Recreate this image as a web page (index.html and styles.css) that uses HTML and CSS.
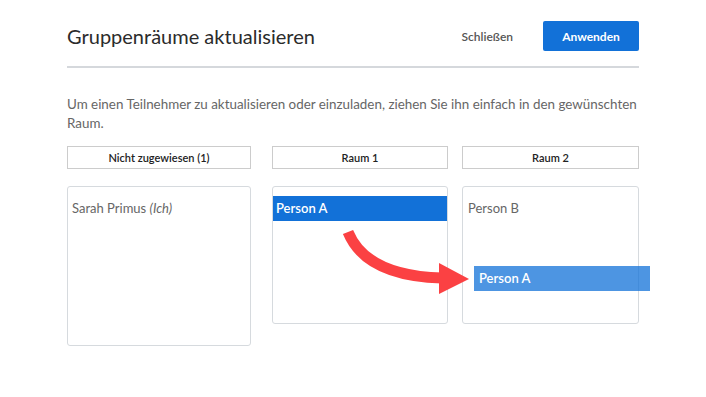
FILE: index.html
```html
<!DOCTYPE html>
<html lang="de">
<head>
  <meta charset="UTF-8">
  <title>Gruppenräume aktualisieren</title>
  <link rel="stylesheet" href="styles.css">
</head>
<body>
  <div class="dialog">
    <!-- Header -->
    <div class="dialog-header">
      <h1 class="dialog-title">Gruppenräume aktualisieren</h1>
      <button class="btn-close">Schließen</button>
      <button class="btn-apply">Anwenden</button>
    </div>

    <p class="hint">Um einen Teilnehmer zu aktualisieren oder einzuladen, ziehen Sie ihn einfach in den gewünschten Raum.</p>

    <!-- Rooms -->
    <div class="rooms">
      <div class="room room-unassigned">
        <div class="room-label">Nicht zugewiesen (1)</div>
        <div class="room-list tall">
          <div class="person">Sarah Primus <em>(Ich)</em></div>
        </div>
      </div>
      <div class="room room-one">
        <div class="room-label">Raum 1</div>
        <div class="room-list">
          <div class="person selected">Person A</div>
        </div>
      </div>
      <div class="room room-two">
        <div class="room-label">Raum 2</div>
        <div class="room-list">
          <div class="person">Person B</div>
        </div>
      </div>
    </div>
  </div>

  <!-- Drag preview and arrow -->
  <svg class="drag-arrow" width="706" height="397" viewBox="0 0 706 397">
    <path d="M348 232 Q366 276 442 278" fill="none" stroke="#fb4143" stroke-width="11"/>
    <polygon points="439,263 469,279 439,294" fill="#fb4143"/>
  </svg>
  <div class="drag-ghost">Person A</div>
</body>
</html>
```

FILE: styles.css
```css
/* General */
body {
  margin: 0;
  font-family: 'Lato', sans-serif;
  color: #333;
  background: #fff;
}

.dialog {
  width: 572px;
  margin-left: 67px;
}

/* Header */
.dialog-header {
  display: flex;
  align-items: center;
  padding-top: 21px;
  padding-bottom: 15px;
  border-bottom: 2px solid #d5d8dc;
}

.dialog-title {
  flex: 1;
  margin: 0;
  font-size: 20px;
  font-weight: 400;
  color: #2b2b2b;
}

.btn-close {
  background: none;
  border: none;
  font-family: inherit;
  font-size: 12px;
  font-weight: 600;
  color: #555;
  padding: 0;
  margin-right: 30px;
}

.btn-apply {
  width: 96px;
  height: 30px;
  background-color: #1271d8;
  color: #fff;
  border: none;
  border-radius: 2px;
  font-family: inherit;
  font-size: 12px;
  font-weight: 700;
}

.hint {
  margin: 27px 0 13px;
  font-size: 13.4px;
  line-height: 19px;
  color: #666;
}

/* Rooms */
.rooms {
  display: flex;
  align-items: flex-start;
}

.room-unassigned { width: 184px; }
.room-one { width: 176px; margin-left: 21px; }
.room-two { width: 177px; margin-left: 14px; }

.room-label {
  height: 21px;
  line-height: 21px;
  border: 1px solid #ccc;
  text-align: center;
  font-size: 11px;
  font-weight: 600;
  color: #222;
}

.room-list {
  margin-top: 17px;
  height: 138px;
  border: 1px solid #d6dade;
  border-radius: 3px;
  padding-top: 9px;
  box-sizing: border-box;
}

.room-list.tall {
  height: 160px;
}

.person {
  height: 25px;
  line-height: 25px;
  padding-left: 4px;
  font-size: 13px;
  color: #666;
}

.room-two .person {
  padding-left: 5px;
}

.person em {
  font-style: italic;
}

.person.selected {
  background-color: #1271d8;
  color: #fff;
  font-weight: 600;
  padding-left: 3px;
}

/* Drag overlay */
.drag-arrow {
  position: absolute;
  top: 0;
  left: 0;
  pointer-events: none;
}

.drag-ghost {
  position: absolute;
  left: 474px;
  top: 266px;
  width: 171px;
  height: 25px;
  line-height: 25px;
  padding-left: 5px;
  background-color: rgba(18, 113, 216, 0.75);
  color: #fff;
  font-size: 13px;
  font-weight: 600;
}
```
